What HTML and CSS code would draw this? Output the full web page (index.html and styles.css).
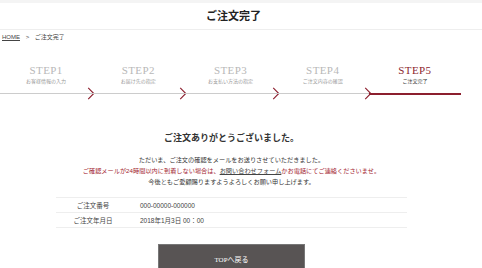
FILE: index.html
```html
<!DOCTYPE html>
<html lang="ja">

<head>
    <meta charset="UTF-8">
    <meta name="viewport" content="width=device-width, initial-scale=1.0">
    <title>ご注文完了</title>
    <link rel="stylesheet" href="styles.css">
</head>

<body>
    <div class="topbar"></div>
    <header class="page-head">
        <h1 class="page-title">ご注文完了</h1>
    </header>
    <div class="page">
        <div class="breadcrumb">
            <a href="#" class="crumb-link">HOME</a>
            <span class="crumb-sep">&gt;</span>
            <span>ご注文完了</span>
        </div>

        <!-- ステップ -->
        <ol class="steps">
            <li class="step">
                <span class="step-no">STEP1</span>
                <span class="step-name">お客様情報の入力</span>
                <svg class="step-arrow" viewBox="0 0 8 14"><path d="M1 1 L7 7 L1 13" /></svg>
            </li>
            <li class="step">
                <span class="step-no">STEP2</span>
                <span class="step-name">お届け先の指定</span>
                <svg class="step-arrow" viewBox="0 0 8 14"><path d="M1 1 L7 7 L1 13" /></svg>
            </li>
            <li class="step">
                <span class="step-no">STEP3</span>
                <span class="step-name">お支払い方法の指定</span>
                <svg class="step-arrow" viewBox="0 0 8 14"><path d="M1 1 L7 7 L1 13" /></svg>
            </li>
            <li class="step">
                <span class="step-no">STEP4</span>
                <span class="step-name">ご注文内容の確認</span>
                <svg class="step-arrow" viewBox="0 0 8 14"><path d="M1 1 L7 7 L1 13" /></svg>
            </li>
            <li class="step current">
                <span class="step-no">STEP5</span>
                <span class="step-name">ご注文完了</span>
            </li>
        </ol>

        <section class="thanks">
            <h2 class="thanks-title">ご注文ありがとうございました。</h2>
            <p class="thanks-text">ただいま、ご注文の確認をメールをお送りさせていただきました。</p>
            <p class="thanks-text notice">ご確認メールが24時間以内に到着しない場合は、<a href="#" class="form-link">お問い合わせフォーム</a>かお電話にてご連絡くださいませ。</p>
            <p class="thanks-text">今後ともご愛顧賜りますようよろしくお願い申し上げます。</p>

            <table class="order-table">
                <tr>
                    <th>ご注文番号</th>
                    <td>000-00000-000000</td>
                </tr>
                <tr>
                    <th>ご注文年月日</th>
                    <td>2018年1月3日 00：00</td>
                </tr>
            </table>

            <a href="#" class="top-btn">TOPへ戻る</a>
        </section>
    </div>
</body>

</html>
```

FILE: styles.css
```css
* {
    margin: 0;
    padding: 0;
    box-sizing: border-box;
}

body {
    background-color: #fff;
    color: #333;
    font-family: "Liberation Sans", "Noto Sans CJK JP", sans-serif;
}

ol,
li {
    list-style: none;
}

.topbar {
    height: 3px;
    background-color: #f4f4f4;
}

.page {
    width: 463px;
}

.page-head {
    height: 27px;
    padding-right: 15px;
    border-bottom: 1px solid #eee;
    text-align: center;
}

.page-title {
    font-family: "Liberation Serif", "Noto Sans CJK JP", serif;
    font-size: 11px;
    font-weight: bold;
    line-height: 26px;
    color: #222;
}

.breadcrumb {
    height: 14px;
    padding-left: 2px;
    font-size: 6px;
    line-height: 14px;
    color: #444;
}

.crumb-link {
    color: #444;
}

.crumb-sep {
    margin: 0 4px;
}

/* ステップ */
.steps {
    display: flex;
    width: 461px;
    margin-top: 20px;
}

.step {
    position: relative;
    flex: 1;
    display: flex;
    flex-direction: column;
    align-items: center;
    padding-bottom: 8px;
    border-bottom: 1px solid #ccc;
    color: #b8b8b8;
}

.step-no {
    font-family: "Liberation Serif", serif;
    font-size: 11px;
    font-weight: normal;
    line-height: 13px;
    letter-spacing: 0.4px;
}

.step-name {
    font-size: 5px;
    line-height: 8px;
    color: #9a9a9a;
}

.step-arrow {
    position: absolute;
    right: -3px;
    bottom: -7px;
    width: 8px;
    height: 13px;
    fill: none;
    stroke: #8c1f2e;
    stroke-width: 1.2;
}

.step.current {
    border-bottom: 2px solid #8c1f2e;
    margin-bottom: -1px;
}

.step.current .step-no {
    color: #8c1f2e;
}

.step.current .step-name {
    color: #333;
}

/* 完了メッセージ */
.thanks {
    display: flex;
    flex-direction: column;
    align-items: center;
    padding-top: 37px;
}

.thanks-title {
    font-family: "Liberation Serif", "Noto Sans CJK JP", serif;
    font-size: 9px;
    font-weight: bold;
    line-height: 14px;
    color: #333;
    margin-bottom: 9px;
}

.thanks-text {
    font-size: 6.2px;
    line-height: 11px;
    color: #333;
}

.notice {
    color: #a3242f;
}

.form-link {
    color: #444;
}

.order-table {
    width: 351px;
    margin-top: 10px;
    border-collapse: collapse;
    font-size: 6.5px;
    color: #444;
}

.order-table tr {
    border-top: 1px solid #eee;
    border-bottom: 1px solid #eee;
}

.order-table th {
    width: 74px;
    height: 15px;
    font-weight: normal;
    text-align: center;
}

.order-table td {
    padding-left: 10px;
}

.top-btn {
    display: flex;
    justify-content: center;
    align-items: center;
    width: 147px;
    height: 30px;
    margin-top: 16px;
    background-color: #585454;
    border: 1px solid #777;
    color: #fff;
    font-family: "Liberation Serif", "Noto Sans CJK JP", serif;
    font-size: 7px;
    text-decoration: none;
}
```
